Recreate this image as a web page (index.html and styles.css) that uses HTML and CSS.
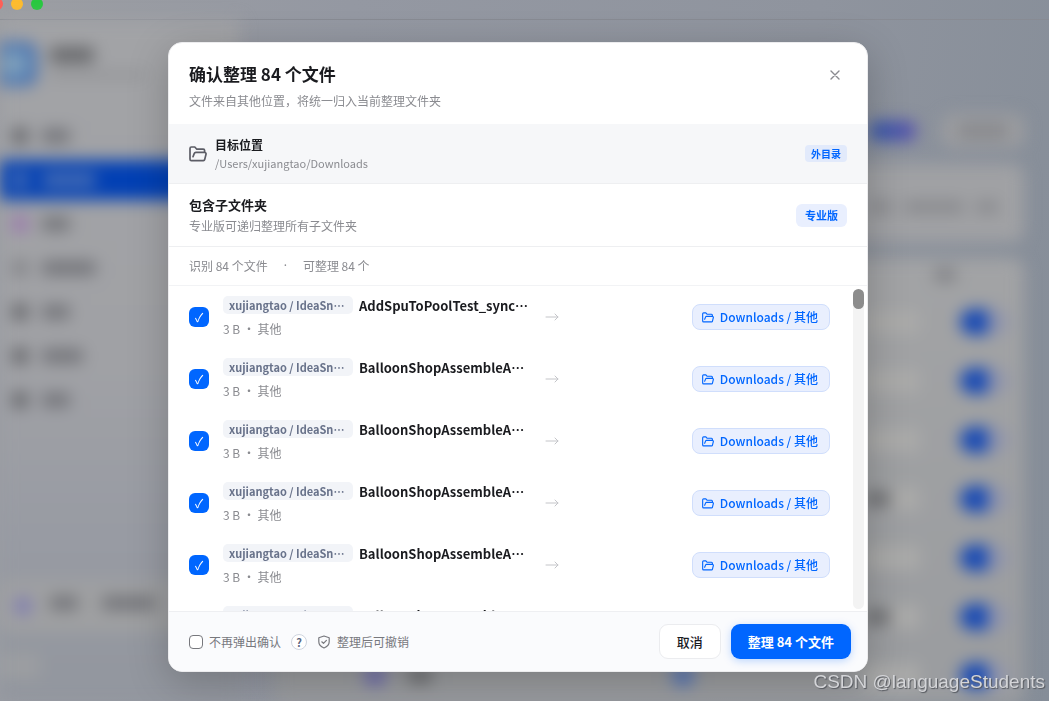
FILE: index.html
```html
<!DOCTYPE html>
<html lang="zh-CN">
<head>
    <meta charset="UTF-8">
    <meta name="viewport" content="width=device-width, initial-scale=1.0">
    <title>确认整理 84 个文件</title>
    <link rel="stylesheet" href="styles.css">
</head>
<body>

<!-- Shared icons -->
<svg class="sprite" aria-hidden="true">
    <symbol id="icon-folder" viewBox="0 0 18 16">
        <path d="M3 14.6H2.400A1.400 1.400 0 0 1 1 13.200V2.400A1.400 1.400 0 0 1 2.400 1h3.400l2 2.200h6.400a1.400 1.400 0 0 1 1.400 1.400V6.400M2.600 14.600h11.800a1.400 1.400 0 0 0 1.300-1l1.300-5.400a1.400 1.400 0 0 0-1.400-1.800H6.800a1.600 1.600 0 0 0-1.500 1l-1.300 3.300" fill="none" stroke="currentColor" stroke-width="1.7" stroke-linecap="round" stroke-linejoin="round"/>
    </symbol>
    <symbol id="icon-arrow" viewBox="0 0 14 10">
        <path d="M1 5h12M10 2l3 3-3 3" fill="none" stroke="currentColor" stroke-width="1" stroke-linecap="round"/>
    </symbol>
</svg>

<!-- Window behind the dialog -->
<div class="titlebar">
    <span class="light red"></span>
    <span class="light yellow"></span>
    <span class="light green"></span>
</div>
<div class="app" aria-hidden="true">
    <div class="sidebar">
        <div class="brand">
            <div class="logo"></div>
            <div class="brand-text"><div class="smudge name"></div><div class="smudge faint wide"></div></div>
        </div>
        <div class="nav">
            <div class="nav-item"><i></i><b class="short"></b></div>
            <div class="nav-item active"><i></i><b class="long"></b></div>
            <div class="nav-item purple"><i></i><b class="short"></b></div>
            <div class="nav-item"><i class="dim"></i><b class="long"></b></div>
            <div class="nav-item"><i></i><b class="short"></b></div>
            <div class="nav-item"><i></i><b class="medium"></b></div>
            <div class="nav-item"><i></i><b class="short"></b></div>
        </div>
        <div class="account"><i></i><b class="short"></b><b class="long"></b></div>
        <div class="account-foot"></div>
    </div>
    <div class="content">
        <div class="toolbar"><div class="pill"></div><div class="ghost"><b></b></div></div>
        <div class="card notice"><b></b><b class="long"></b><b></b></div>
        <div class="card table">
            <div class="table-head"><b></b></div>
            <div class="table-row"><em></em><div class="switch"></div></div>
            <div class="table-row"><em></em><div class="switch"></div></div>
            <div class="table-row"><em></em><div class="switch"></div></div>
            <div class="table-row"><b></b><em class="small"></em><div class="switch"></div></div>
            <div class="table-row"><em></em><div class="switch"></div></div>
            <div class="table-row"><b></b><em class="small"></em><div class="switch"></div></div>
            <div class="table-row last"><i class="violet"></i><b></b><i class="blue"></i><em></em><div class="switch"></div></div>
        </div>
    </div>
</div>

<!-- Dialog -->
<div class="overlay">
    <form class="modal" role="dialog" aria-labelledby="title">
        <header class="modal-header">
            <div>
                <h1 id="title">确认整理 84 个文件</h1>
                <p>文件来自其他位置，将统一归入当前整理文件夹</p>
            </div>
            <button type="button" class="close" aria-label="关闭">
                <svg width="10" height="10" viewBox="0 0 10 10"><path d="M1 1l8 8M9 1l-8 8" stroke="currentColor" stroke-width="1.4" stroke-linecap="round"/></svg>
            </button>
        </header>

        <section class="target">
            <svg class="target-icon"><use href="#icon-folder"/></svg>
            <div class="grow">
                <h2>目标位置</h2>
                <p>/Users/xujiangtao/Downloads</p>
            </div>
            <span class="badge">外目录</span>
        </section>

        <section class="subfolders">
            <div class="grow">
                <h2>包含子文件夹</h2>
                <p>专业版可递归整理所有子文件夹</p>
            </div>
            <span class="badge pro">专业版</span>
        </section>

        <div class="stats">
            <span>识别 84 个文件</span>
            <span class="dot">·</span>
            <span>可整理 84 个</span>
        </div>

        <div class="files">
            <ul class="file-list">
                <li class="file">
                    <input type="checkbox" class="check" aria-label="AddSpuToPoolTest_sync…" checked>
                    <div class="info">
                        <div class="name-line"><span class="tag">xujiangtao / IdeaSn…</span><strong>AddSpuToPoolTest_sync…</strong></div>
                        <div class="meta">3 B ・ 其他</div>
                    </div>
                    <svg class="arrow"><use href="#icon-arrow"/></svg>
                    <span class="dest"><svg><use href="#icon-folder"/></svg>Downloads / 其他</span>
                </li>
                <li class="file">
                    <input type="checkbox" class="check" aria-label="BalloonShopAssembleA…" checked>
                    <div class="info">
                        <div class="name-line"><span class="tag">xujiangtao / IdeaSn…</span><strong>BalloonShopAssembleA…</strong></div>
                        <div class="meta">3 B ・ 其他</div>
                    </div>
                    <svg class="arrow"><use href="#icon-arrow"/></svg>
                    <span class="dest"><svg><use href="#icon-folder"/></svg>Downloads / 其他</span>
                </li>
                <li class="file">
                    <input type="checkbox" class="check" aria-label="BalloonShopAssembleA…" checked>
                    <div class="info">
                        <div class="name-line"><span class="tag">xujiangtao / IdeaSn…</span><strong>BalloonShopAssembleA…</strong></div>
                        <div class="meta">3 B ・ 其他</div>
                    </div>
                    <svg class="arrow"><use href="#icon-arrow"/></svg>
                    <span class="dest"><svg><use href="#icon-folder"/></svg>Downloads / 其他</span>
                </li>
                <li class="file">
                    <input type="checkbox" class="check" aria-label="BalloonShopAssembleA…" checked>
                    <div class="info">
                        <div class="name-line"><span class="tag">xujiangtao / IdeaSn…</span><strong>BalloonShopAssembleA…</strong></div>
                        <div class="meta">3 B ・ 其他</div>
                    </div>
                    <svg class="arrow"><use href="#icon-arrow"/></svg>
                    <span class="dest"><svg><use href="#icon-folder"/></svg>Downloads / 其他</span>
                </li>
                <li class="file">
                    <input type="checkbox" class="check" aria-label="BalloonShopAssembleA…" checked>
                    <div class="info">
                        <div class="name-line"><span class="tag">xujiangtao / IdeaSn…</span><strong>BalloonShopAssembleA…</strong></div>
                        <div class="meta">3 B ・ 其他</div>
                    </div>
                    <svg class="arrow"><use href="#icon-arrow"/></svg>
                    <span class="dest"><svg><use href="#icon-folder"/></svg>Downloads / 其他</span>
                </li>
                <li class="file">
                    <input type="checkbox" class="check" aria-label="BalloonShopAssembleA…" checked>
                    <div class="info">
                        <div class="name-line"><span class="tag">xujiangtao / IdeaSn…</span><strong>BalloonShopAssembleA…</strong></div>
                        <div class="meta">3 B ・ 其他</div>
                    </div>
                    <svg class="arrow"><use href="#icon-arrow"/></svg>
                    <span class="dest"><svg><use href="#icon-folder"/></svg>Downloads / 其他</span>
                </li>
            </ul>
            <div class="scrollbar"><div class="thumb"></div></div>
        </div>

        <footer class="modal-footer">
            <input type="checkbox" id="skip" class="skip">
            <label for="skip">不再弹出确认</label>
            <button type="button" class="help">?</button>
            <span class="undo">
                <svg width="14" height="14" viewBox="0 0 14 14" fill="none" stroke="currentColor" stroke-width="1.2" stroke-linecap="round" stroke-linejoin="round"><path d="M7 1l5.200 1.800v4c0 2.900-2.200 5-5.200 6.200C4 11.800 1.800 9.700 1.800 6.800v-4z"/><path d="M4.800 6.800l1.700 1.600 2.900-3"/></svg>
                整理后可撤销
            </span>
            <button type="button" class="btn">取消</button>
            <button type="submit" class="btn primary">整理 84 个文件</button>
        </footer>
    </form>
</div>

<div class="watermark">CSDN @languageStudents</div>

</body>
</html>
```
FILE: styles.css
```css
* {
    box-sizing: border-box;
}

body {
    margin: 0;
    height: 100vh;
    overflow: hidden;
    display: flex;
    flex-direction: column;
    font-family: "Noto Sans CJK SC", sans-serif;
    font-size: 12px;
    line-height: 18px;
    color: #1a1b1f;
    background: linear-gradient(100deg, #9c9ea3 0%, #9498a2 30%, #8f949e 70%, #858d98 100%);
}

h1, h2, p, ul {
    margin: 0;
    padding: 0;
}

button, input {
    font-family: inherit;
    margin: 0;
    padding: 0;
}

.sprite {
    position: absolute;
    width: 0;
    height: 0;
}

/* Window chrome */
.titlebar {
    flex: none;
    display: flex;
    gap: 8px;
    height: 20px;
    margin-left: -9px;
    border-bottom: 1px solid #888b93;
}

.light {
    width: 12px;
    height: 12px;
    margin-top: -2px;
    border-radius: 50%;
}

.red { background: #ff5f57; }
.yellow { background: #febc2e; }
.green { background: #28c840; }

/* Blurred app */
.app {
    flex: 1;
    min-height: 0;
    display: flex;
    filter: blur(8px);
}

.app b, .app em, .smudge {
    display: block;
    height: 14px;
    border-radius: 4px;
    background: #737479;
}

.sidebar {
    flex: none;
    width: 240px;
    display: flex;
    flex-direction: column;
    background: linear-gradient(#a2a3a6 0%, #a0a1a5 50%, #989ba3 75%, #92969e 100%);
}

.brand {
    display: flex;
    gap: 13px;
    padding: 22px 0 30px;
}

.logo {
    width: 37px;
    height: 44px;
    border-radius: 0 12px 12px 0;
    background: radial-gradient(circle at 40% 50%, #a3b8c0 0%, #6b92b8 35%, #3c68b0 75%);
}

.brand-text {
    padding-top: 5px;
}

.smudge.name {
    width: 44px;
    height: 16px;
    background: #68696c;
}

.smudge.faint {
    height: 8px;
    margin-top: 8px;
    background: #949598;
}

.smudge.wide {
    width: 96px;
}

.nav-item {
    display: flex;
    align-items: center;
    gap: 14px;
    height: 40px;
    margin-bottom: 4px;
    padding-left: 12px;
}

.nav-item i {
    width: 16px;
    height: 16px;
    border-radius: 4px;
    background: #66676b;
}

.nav-item i.dim { background: #848589; }
.nav-item.purple i { background: #9a78ae; }

.nav-item.active {
    background: #0240b4;
}

.nav-item.active i, .nav-item.active b {
    background: #4a6fb4;
}

.app .short { width: 28px; }
.app .medium { width: 41px; }
.app .long { width: 54px; }

.account {
    display: flex;
    gap: 24px;
    height: 52px;
    margin-top: 156px;
    padding: 16px 14px;
    background: #9fa0a2;
    border-radius: 10px;
}

.account i {
    width: 18px;
    height: 20px;
    margin-right: -6px;
    border-radius: 50%;
    background: #807eb0;
}

.account-foot {
    width: 40px;
    height: 24px;
    margin-top: 22px;
    background: #9c9ea1;
}

.content {
    flex: 1;
    display: flex;
    flex-direction: column;
    padding: 94px 25px 0 34px;
}

.toolbar {
    flex: none;
    display: flex;
    justify-content: flex-end;
    align-items: center;
    gap: 26px;
    height: 34px;
    margin-bottom: 16px;
}

.pill {
    width: 46px;
    height: 20px;
    border-radius: 8px;
    background: linear-gradient(90deg, #3056ac, #5a52ac);
}

.ghost {
    width: 82px;
    height: 34px;
    padding: 10px 16px;
    border-radius: 10px;
    background: #9c9da0;
}

.app .ghost b {
    background: #86878b;
}

.card {
    border-radius: 12px;
    background: #a0a1a4;
}

.notice {
    flex: none;
    display: flex;
    justify-content: flex-end;
    align-items: center;
    gap: 12px;
    height: 78px;
    margin-bottom: 16px;
    padding: 8px 26px 0 0;
}

.app .notice b {
    width: 22px;
    height: 12px;
    background: #88898d;
}

.app .notice b.long {
    width: 60px;
}

.table {
    flex: 1;
    background: linear-gradient(#a2a3a5, #9a9c9f);
}

.table-head {
    display: flex;
    justify-content: flex-end;
    height: 34px;
    padding: 10px 68px 0 0;
}

.app .table-head b {
    width: 22px;
    background: #828387;
}

.table-row {
    display: flex;
    justify-content: flex-end;
    align-items: center;
    height: 59px;
    padding-right: 16px;
}

.app .table-row b {
    width: 24px;
    background: #6c6d70;
}

.app .table-row em {
    width: 56px;
    height: 24px;
    margin-right: 40px;
    background: #aaaaa9;
}

.app .table-row em.small {
    width: 30px;
}

.switch {
    width: 48px;
    height: 26px;
    border-radius: 13px;
    background: linear-gradient(90deg, #1648b4 55%, #8f94ac 60%);
}

.table-row.last b {
    margin: 0 auto 0 22px;
}

.table-row i {
    width: 22px;
    height: 20px;
    border-radius: 8px;
}

.violet {
    margin-left: 90px;
    background: #716fae;
}

.blue {
    margin-right: 170px;
    background: #5877b8;
}

/* Dialog */
.overlay {
    position: fixed;
    inset: 0;
    display: flex;
    justify-content: center;
    padding: 42px 13px 29px 0;
}

.modal {
    display: flex;
    flex-direction: column;
    width: 100%;
    max-width: 700px;
    border: 1px solid #ececee;
    border-radius: 14px;
    overflow: hidden;
    background: #fff;
    box-shadow: 0 10px 40px rgba(0, 0, 0, 0.22);
}

.modal p {
    color: #8a8b90;
}

.modal h2 {
    font-size: 13px;
    font-weight: 600;
    line-height: 20px;
}

.grow {
    flex: 1;
}

.modal-header {
    display: flex;
    justify-content: space-between;
    align-items: flex-start;
    height: 81px;
    padding: 20px;
}

.modal-header h1 {
    font-size: 17px;
    font-weight: 600;
    line-height: 22px;
    margin-bottom: 7px;
}

.close {
    display: flex;
    align-items: center;
    justify-content: center;
    width: 24px;
    height: 24px;
    border: 0;
    background: none;
    color: #8a8b90;
}

.target, .subfolders {
    display: flex;
    align-items: center;
    padding: 0 20px;
    border-bottom: 1px solid #eeeff1;
}

.target {
    height: 60px;
    gap: 8px;
    background: #f6f7f9;
}

.target h2 {
    font-size: 12px;
    line-height: 18px;
}

.target p {
    font-size: 11px;
}

.target-icon {
    width: 18px;
    height: 16px;
    color: #5c5d66;
}

.subfolders {
    height: 63px;
}

.subfolders h2 {
    margin-bottom: 2px;
}

.badge {
    padding: 0 6px;
    border-radius: 4px;
    font-size: 10px;
    font-weight: 600;
    line-height: 17px;
    color: #0066ff;
    background: #e2eafb;
}

.badge.pro {
    padding: 0 9px;
    border-radius: 6px;
    font-size: 11px;
    line-height: 23px;
    background: #e9effe;
}

.stats {
    display: flex;
    align-items: center;
    gap: 16px;
    height: 39px;
    padding: 0 20px;
    border-bottom: 1px solid #f2f3f5;
    color: #8a8b90;
}

.dot {
    font-family: "Noto Sans", sans-serif;
}

.files {
    flex: 1;
    min-height: 0;
    display: flex;
}

.file-list {
    flex: 1;
    overflow: hidden;
    list-style: none;
}

.file {
    display: grid;
    grid-template-columns: 20px minmax(0, 12fr) 14px minmax(0, 10fr);
    align-items: center;
    column-gap: 14px;
    height: 62px;
    padding: 0 23px 0 20px;
}

.check {
    appearance: none;
    display: flex;
    align-items: center;
    justify-content: center;
    width: 20px;
    height: 20px;
    border-radius: 6px;
    background: #0066ff;
}

.check:checked::after {
    content: "✓";
    font-size: 12px;
    line-height: 20px;
    color: #fff;
}

.name-line {
    display: flex;
    gap: 6px;
    height: 20px;
    margin-bottom: 4px;
}

.name-line strong {
    font-size: 13px;
    font-weight: 600;
    line-height: 20px;
    white-space: nowrap;
}

.tag {
    flex: none;
    width: 130px;
    height: 18px;
    padding: 0 6px;
    border-radius: 5px;
    font-size: 11px;
    font-weight: 600;
    white-space: nowrap;
    color: #68728a;
    background: #f2f4f8;
}

.meta {
    color: #8a8b90;
}

.arrow {
    width: 14px;
    height: 10px;
    color: #c4c5c9;
}

.dest {
    justify-self: end;
    display: flex;
    align-items: center;
    gap: 6px;
    height: 26px;
    padding: 0 11px 0 9px;
    border: 1px solid #d0defc;
    border-radius: 8px;
    font-weight: 500;
    color: #0066ff;
    background: #e9effe;
}

.dest svg {
    width: 12px;
    height: 11px;
}

.scrollbar {
    width: 11px;
    margin: 3px 3px 2px 0;
    border-radius: 6px;
    background: #f3f3f3;
}

.thumb {
    height: 20px;
    border-radius: 6px;
    background: #8c8c8c;
}

.modal-footer {
    display: flex;
    align-items: center;
    height: 60px;
    padding: 0 16px 0 20px;
    border-top: 1px solid #eeeff2;
    color: #77787d;
    background: #fafbfd;
}

.skip {
    appearance: none;
    width: 14px;
    height: 14px;
    margin-right: 6px;
    border: 1px solid #77787d;
    border-radius: 4px;
    background: #fff;
}

.help {
    width: 16px;
    height: 16px;
    margin: 0 10px;
    border: 1px solid #cfd5df;
    border-radius: 50%;
    font-size: 11px;
    font-weight: 600;
    line-height: 14px;
    color: #5c6780;
    background: #fff;
}

.undo {
    display: flex;
    align-items: center;
    gap: 6px;
    margin-right: auto;
}

.btn {
    height: 35px;
    margin-left: 10px;
    padding: 0 17px;
    border: 1px solid #ebecef;
    border-radius: 9px;
    font-size: 13px;
    font-weight: 500;
    color: #1a1b1f;
    background: #fff;
}

.btn.primary {
    border: 0;
    font-weight: 600;
    color: #fff;
    background: #0066ff;
    box-shadow: 0 2px 8px rgba(0, 102, 255, 0.25);
}

.watermark {
    position: fixed;
    right: 4px;
    bottom: 7px;
    font-family: "Liberation Sans", sans-serif;
    font-size: 19px;
    line-height: 24px;
    color: #d4d5d8;
    text-shadow: 1px 1px 1px #55585e;
}
```
